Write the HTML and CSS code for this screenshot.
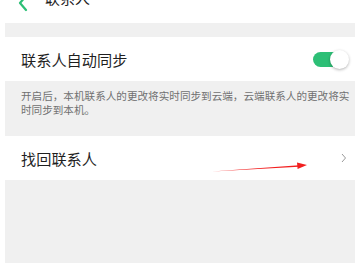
FILE: index.html
```html
<!DOCTYPE html>
<html lang="zh">
<head>
<meta charset="utf-8">
<link rel="stylesheet" href="styles.css">
</head>
<body>
<div class="page">
  <header class="topbar">
    <svg class="back" width="10" height="16" viewBox="0 0 10 16"><path d="M8 0 L2 7 L8 14" fill="none" stroke="#2dbf76" stroke-width="2.2" stroke-linecap="round" stroke-linejoin="round"/></svg>
    <span class="title">联系人</span>
  </header>
  <main class="panel">
    <div class="gap-top"></div>
    <div class="row">
      <span class="row-label">联系人自动同步</span>
      <span class="toggle"><span class="knob"></span></span>
    </div>
    <p class="desc">开启后，本机联系人的更改将实时同步到云端，云端联系人的更改将实时同步到本机。</p>
    <div class="row row-link">
      <span class="row-label">找回联系人</span>
      <svg class="chev" width="6" height="10" viewBox="0 0 6 10"><path d="M1 1 L4.5 5 L1 9" fill="none" stroke="#9a9a9a" stroke-width="1"/></svg>
      <svg class="arrow" width="100" height="14" viewBox="0 0 100 14"><path d="M1 10.5 L88 4.2 L88 5.8 Z" fill="#f21f1f"/><path d="M86 1.5 L96 4 L86.6 8 Z" fill="#f21f1f"/></svg>
    </div>
    <div class="filler"></div>
  </main>
</div>
</body>
</html>
```

FILE: styles.css
```css
html, body {
  margin: 0;
  padding: 0;
  background: #ffffff;
}
body {
  font-family: "Noto Sans CJK SC", "Noto Sans", sans-serif;
  color: #1f1f1f;
}
.page {
  width: 356px;
  height: 264px;
  overflow: hidden;
  background: #ffffff;
}
.topbar {
  height: 23px;
  position: relative;
  display: flex;
  align-items: flex-end;
}
.back {
  position: absolute;
  left: 18px;
  top: -4px;
}
.title {
  position: absolute;
  left: 45px;
  top: -13px;
  font-size: 15px;
  line-height: 22px;
  color: #1f1f1f;
}
.panel {
  margin-left: 5px;
  width: 350px;
  background: #f0f0f0;
  display: flex;
  flex-direction: column;
}
.gap-top {
  height: 14px;
}
.row {
  height: 44px;
  background: #ffffff;
  display: flex;
  align-items: center;
  padding: 0 7px 0 16px;
  position: relative;
  margin-left: -5px;
  padding-left: 21px;
}
.row-label {
  flex: 1;
  font-size: 15.2px;
  line-height: 20px;
  color: #1f1f1f;
}
.toggle {
  width: 29px;
  height: 15px;
  border-radius: 8px;
  background: #2dbf76;
  position: relative;
  margin-right: 6px;
}
.knob {
  position: absolute;
  right: -7px;
  top: -2px;
  width: 19px;
  height: 19px;
  border-radius: 50%;
  background: #ffffff;
  box-shadow: 0 1px 3px rgba(0,0,0,0.3);
}
.desc {
  margin: 0;
  padding: 8px 4px 12px 16px;
  height: 35px;
  font-size: 10.6px;
  line-height: 14px;
  color: #707070;
}
.row-link {
  height: 44px;
}
.chev {
  margin-right: 1px;
}
.arrow {
  position: absolute;
  left: 211px;
  top: 25px;
}
.filler {
  height: 83px;
}
```
